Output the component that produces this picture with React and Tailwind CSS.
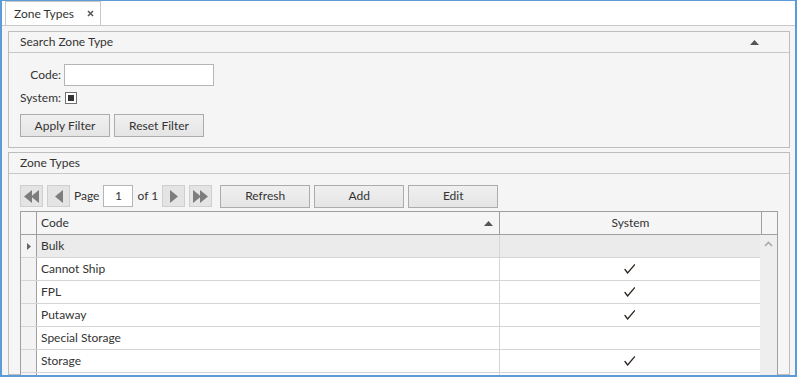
const font = { fontFamily: "Lato, 'Noto Sans', sans-serif" };

function Btn({ children, w = "w-[90px]" }) {
  return (
    <div
      className={`${w} h-[23px] flex items-center justify-center border border-[#acacac] bg-gradient-to-b from-[#f0f0f0] to-[#e5e5e5] text-[12px] text-[#333]`}
    >
      {children}
    </div>
  );
}

function PagerBtn({ dir, double }) {
  const tri = (x) =>
    dir === "left"
      ? `M${x + 8} 0 L${x} 6.5 L${x + 8} 13 Z`
      : `M${x} 0 L${x + 8} 6.5 L${x} 13 Z`;
  const w = double ? 15 : 8;
  return (
    <div className="w-[23px] h-[22px] flex items-center justify-center border border-[#cfcfcf] bg-[#e4e4e4]">
      <svg width={w} height="13" viewBox={`0 0 ${w} 13`}>
        {double ? (
          <>
            <path d={dir === "left" ? tri(0) : tri(0)} fill="#7d7d7d" />
            <path d={tri(7)} fill="#7d7d7d" />
          </>
        ) : (
          <path d={tri(0)} fill="#7d7d7d" />
        )}
      </svg>
    </div>
  );
}

function Check() {
  return (
    <svg width="11" height="10" viewBox="0 0 11 10">
      <path d="M1 5.5 L3.6 9 L10.5 0.8" stroke="#2b2420" strokeWidth="1.3" fill="none" strokeLinecap="round" />
    </svg>
  );
}

const rows = [
  { code: "Bulk", sys: false, current: true },
  { code: "Cannot Ship", sys: true },
  { code: "FPL", sys: true },
  { code: "Putaway", sys: true },
  { code: "Special Storage", sys: false },
  { code: "Storage", sys: true },
  { code: "", sys: false },
];

export default function App() {
  return (
    <div
      style={font}
      className="w-[797px] h-[377px] overflow-hidden bg-white border-x-2 border-b-2 border-t border-[#5b9bd8] flex flex-col text-[12px] text-[#333]"
    >
      {/* tab strip */}
      <div className="h-[25px] shrink-0 border-b border-[#c8c8c8] flex items-end pl-[3px]">
        <div className="h-[24px] w-[96px] border-t border-x border-[#c8c8c8] bg-white flex items-center pl-[8px] gap-[13px]">
          <span>Zone Types</span>
          <svg width="7" height="7" viewBox="0 0 7 7">
            <path d="M1 1 L6 6 M6 1 L1 6" stroke="#555" strokeWidth="1.5" />
          </svg>
        </div>
      </div>

      {/* content */}
      <div className="flex-1 bg-[#f5f5f5] pl-[6px] pr-[5px] pt-[5px] flex flex-col gap-[4px] min-h-0">
        {/* search panel */}
        <div className="h-[117px] shrink-0 border border-[#bdbdbd] flex flex-col">
          <div className="h-[21px] border-b border-[#c8c8c8] flex items-center justify-between pl-[11px] pr-[30px]">
            <span>Search Zone Type</span>
            <svg width="9" height="5" viewBox="0 0 9 5">
              <path d="M0 5 L4.5 0 L9 5 Z" fill="#555" />
            </svg>
          </div>
          <div className="pl-[11px] pt-[11px]">
            <div className="flex items-center h-[22px]">
              <span className="w-[42px] text-right pr-[1px]">Code:</span>
              <div className="ml-[2px] w-[150px] h-[22px] bg-white border border-[#b5b5b5]" />
            </div>
            <div className="flex items-center h-[12px] mt-[6px]">
              <span className="w-[42px] text-right pr-[1px]">System:</span>
              <div className="ml-[3px] w-[12px] h-[12px] border border-[#707070] bg-white p-[2px]">
                <div className="w-full h-full bg-[#333]" />
              </div>
            </div>
            <div className="flex gap-[4px] mt-[10px]">
              <Btn>Apply Filter</Btn>
              <Btn>Reset Filter</Btn>
            </div>
          </div>
        </div>

        {/* zone types panel */}
        <div className="flex-1 border border-[#bdbdbd] flex flex-col min-h-0">
          <div className="h-[21px] shrink-0 border-b border-[#c8c8c8] flex items-center pl-[11px]">
            <span>Zone Types</span>
          </div>
          <div className="px-[11px] pt-[11px] flex flex-col">
            {/* pager */}
            <div className="flex items-center h-[22px]">
              <PagerBtn dir="left" double />
              <div className="ml-[4px]"><PagerBtn dir="left" /></div>
              <span className="ml-[4px]">Page</span>
              <div className="ml-[4px] w-[30px] h-[22px] bg-white border border-[#b5b5b5] flex items-center justify-center">1</div>
              <span className="ml-[4px]">of 1</span>
              <div className="ml-[4px]"><PagerBtn dir="right" /></div>
              <div className="ml-[4px]"><PagerBtn dir="right" double /></div>
              <div className="ml-[8px] flex gap-[4px]">
                <Btn>Refresh</Btn>
                <Btn>Add</Btn>
                <Btn>Edit</Btn>
              </div>
            </div>

            {/* grid */}
            <div className="mt-[4px] border border-[#a0a0a0] bg-white">
              <div className="flex h-[23px] border-b border-[#a0a0a0] bg-[#f5f5f5]">
                <div className="w-[16px] border-r border-[#a0a0a0]" />
                <div className="w-[463px] border-r border-[#a0a0a0] flex items-center justify-between pl-[4px] pr-[6px]">
                  <span>Code</span>
                  <svg width="9" height="5" viewBox="0 0 9 5">
                    <path d="M0 5 L4.5 0 L9 5 Z" fill="#555" />
                  </svg>
                </div>
                <div className="w-[262px] border-r border-[#a0a0a0] flex items-center justify-center">System</div>
                <div className="flex-1" />
              </div>
              <div className="flex">
                <div className="w-[739px]">
                  {rows.map((r, i) => (
                    <div
                      key={i}
                      className={`flex h-[23px] border-b border-[#d5d5d5] ${r.current ? "bg-[#ebebeb]" : "bg-white"}`}
                    >
                      <div className="w-[16px] border-r border-[#a0a0a0] bg-[#f3f3f3] flex items-center justify-center">
                        {r.current && (
                          <svg width="4" height="7" viewBox="0 0 4 7">
                            <path d="M0 0 L4 3.5 L0 7 Z" fill="#666" />
                          </svg>
                        )}
                      </div>
                      <div className="w-[463px] border-r border-[#d5d5d5] flex items-center pl-[4px]">{r.code}</div>
                      <div className="w-[260px] flex items-center justify-center pr-[2px]">{r.sys && <Check />}</div>
                    </div>
                  ))}
                </div>
                <div className="flex-1 bg-[#eeeeee] flex justify-center pt-[6px]">
                  <svg width="9" height="6" viewBox="0 0 9 6">
                    <path d="M1 5 L4.5 1.5 L8 5" stroke="#aaa" strokeWidth="1.6" fill="none" />
                  </svg>
                </div>
              </div>
            </div>
          </div>
        </div>
      </div>
    </div>
  );
}
